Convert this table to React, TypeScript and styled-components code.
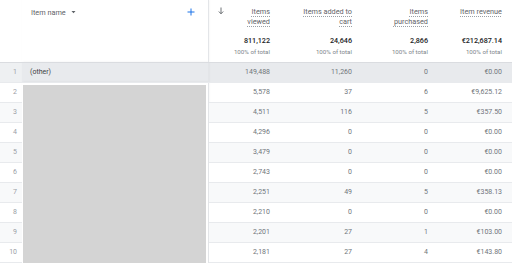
import styled, { createGlobalStyle } from 'styled-components';

const GlobalStyle = createGlobalStyle`
  body {
    margin: 0;
    background: #fff;
    font-family: Roboto, 'Liberation Sans', sans-serif;
    -webkit-font-smoothing: antialiased;
  }
`;

const Table = styled.table`
  width: 512px;
  table-layout: fixed;
  border-collapse: collapse;
  font-size: 7px;
  color: #70757a;
`;

const HeadCell = styled.th<{ $sticky?: boolean }>`
  height: 62px;
  box-sizing: border-box;
  padding: 7px 10px 0 0;
  vertical-align: top;
  text-align: right;
  font-weight: 400;
  color: #5f6368;
  border-bottom: 1px solid #dadce0;
  ${(p) => p.$sticky && 'border-right: 1px solid #e3e5e8; box-shadow: 1px 0 2px rgba(60,64,67,0.08);'}
`;

const NameHead = styled.div`
  display: flex;
  align-items: center;
  justify-content: space-between;
  height: 10px;
  padding-left: 9px;
  padding-right: 3px;
  font-size: 7.3px;
  color: #5f6368;
`;

const NameLabel = styled.span`
  display: flex;
  align-items: center;
  gap: 5px;
`;

const SortHead = styled.div`
  display: flex;
  justify-content: space-between;
  align-items: flex-start;
  padding-left: 9px;
`;

const MetricHead = styled.div`
  display: flex;
  flex-direction: column;
  align-items: flex-end;
`;

const Label = styled.span`
  display: block;
  height: 29px;
  line-height: 10px;
  font-size: 7.3px;
  color: #5f6368;
  text-decoration-line: underline;
  text-decoration-style: dotted;
  text-decoration-color: #9aa0a6;
  text-underline-offset: 2px;
`;

const Total = styled.span`
  display: block;
  line-height: 10px;
  font-weight: 500;
  color: #202124;
  font-size: 7.2px;
`;

const Pct = styled.span`
  display: block;
  margin-top: 1px;
  line-height: 10px;
  font-size: 6.2px;
  color: #80868b;
`;

const Row = styled.tr<{ $variant: 'highlight' | 'stripe' | 'plain' }>`
  height: 20px;
  background: ${(p) =>
    p.$variant === 'highlight' ? '#e8eaed' : p.$variant === 'stripe' ? '#f8f9fa' : '#fff'};

  td:first-child {
    background: ${(p) => (p.$variant === 'highlight' ? '#eef0f2' : 'inherit')};
  }
`;

const Cell = styled.td`
  padding: 0 10px 0 0;
  text-align: right;
  color: #70757a;
  border-bottom: 1px solid #e8eaed;
  white-space: nowrap;
`;

const IndexCell = styled.td`
  padding: 0 5px 0 0;
  text-align: right;
  color: #9aa0a6;
  border-bottom: 1px solid #e8eaed;
`;

const NameCell = styled.td`
  padding: 0 0 0 8px;
  text-align: left;
  color: #3c4043;
  border-bottom: 1px solid #e8eaed;
  border-right: 1px solid #e3e5e8;
  box-shadow: 1px 0 2px rgba(60, 64, 67, 0.08);
`;

const RedactedCell = styled.td`
  padding: 2px 2px 0 1px;
  vertical-align: top;
  background: #fff;
  border-right: 1px solid #e3e5e8;
  box-shadow: 1px 0 2px rgba(60, 64, 67, 0.08);
`;

const Redaction = styled.div`
  height: 178px;
  background: #d4d4d4;
`;

const rows = [
  ['149,488', '11,260', '0', '€0.00'],
  ['5,578', '37', '6', '€9,625.12'],
  ['4,511', '116', '5', '€357.50'],
  ['4,296', '0', '0', '€0.00'],
  ['3,479', '0', '0', '€0.00'],
  ['2,743', '0', '0', '€0.00'],
  ['2,251', '49', '5', '€358.13'],
  ['2,210', '0', '0', '€0.00'],
  ['2,201', '27', '1', '€103.00'],
  ['2,181', '27', '4', '€143.80'],
];

const PlusIcon = () => (
  <svg width="8" height="8" viewBox="0 0 8 8">
    <path d="M4 0.5v7M0.5 4h7" stroke="#1a73e8" strokeWidth="1" />
  </svg>
);

const CaretIcon = () => (
  <svg width="5" height="4" viewBox="0 0 5 4">
    <path d="M0.5 1h4L2.5 3.2z" fill="#5f6368" />
  </svg>
);

const ArrowDown = () => (
  <svg width="6" height="8" viewBox="0 0 6 8">
    <path d="M3 0.5v6.2M0.8 4.5L3 6.8l2.2-2.3" stroke="#5f6368" strokeWidth="0.9" fill="none" />
  </svg>
);

const App = () => {
  return (
    <>
      <GlobalStyle />
      <Table>
        <colgroup>
          <col style={{ width: 22 }} />
          <col style={{ width: 186 }} />
          <col style={{ width: 72 }} />
          <col style={{ width: 82 }} />
          <col style={{ width: 76 }} />
          <col style={{ width: 74 }} />
        </colgroup>
        <thead>
          <tr>
            <HeadCell />
            <HeadCell $sticky>
              <NameHead>
                <NameLabel>
                  Item name <CaretIcon />
                </NameLabel>
                <PlusIcon />
              </NameHead>
            </HeadCell>
            <HeadCell>
              <SortHead>
                <ArrowDown />
                <MetricHead>
                  <Label>
                    Items
                    <br />
                    viewed
                  </Label>
                  <Total>811,122</Total>
                  <Pct>100% of total</Pct>
                </MetricHead>
              </SortHead>
            </HeadCell>
            <HeadCell>
              <MetricHead>
                <Label>
                  Items added to
                  <br />
                  cart
                </Label>
                <Total>24,646</Total>
                <Pct>100% of total</Pct>
              </MetricHead>
            </HeadCell>
            <HeadCell>
              <MetricHead>
                <Label>
                  Items
                  <br />
                  purchased
                </Label>
                <Total>2,866</Total>
                <Pct>100% of total</Pct>
              </MetricHead>
            </HeadCell>
            <HeadCell>
              <MetricHead>
                <Label>Item revenue</Label>
                <Total>€212,687.14</Total>
                <Pct>100% of total</Pct>
              </MetricHead>
            </HeadCell>
          </tr>
        </thead>
        <tbody>
          {rows.map((r, i) => (
            <Row key={i} $variant={i === 0 ? 'highlight' : i % 2 === 0 ? 'stripe' : 'plain'}>
              <IndexCell>{i + 1}</IndexCell>
              {i === 0 && <NameCell>(other)</NameCell>}
              {i === 1 && (
                <RedactedCell rowSpan={9}>
                  <Redaction />
                </RedactedCell>
              )}
              {r.map((v, j) => (
                <Cell key={j}>{v}</Cell>
              ))}
            </Row>
          ))}
        </tbody>
      </Table>
    </>
  );
};

export default App;
